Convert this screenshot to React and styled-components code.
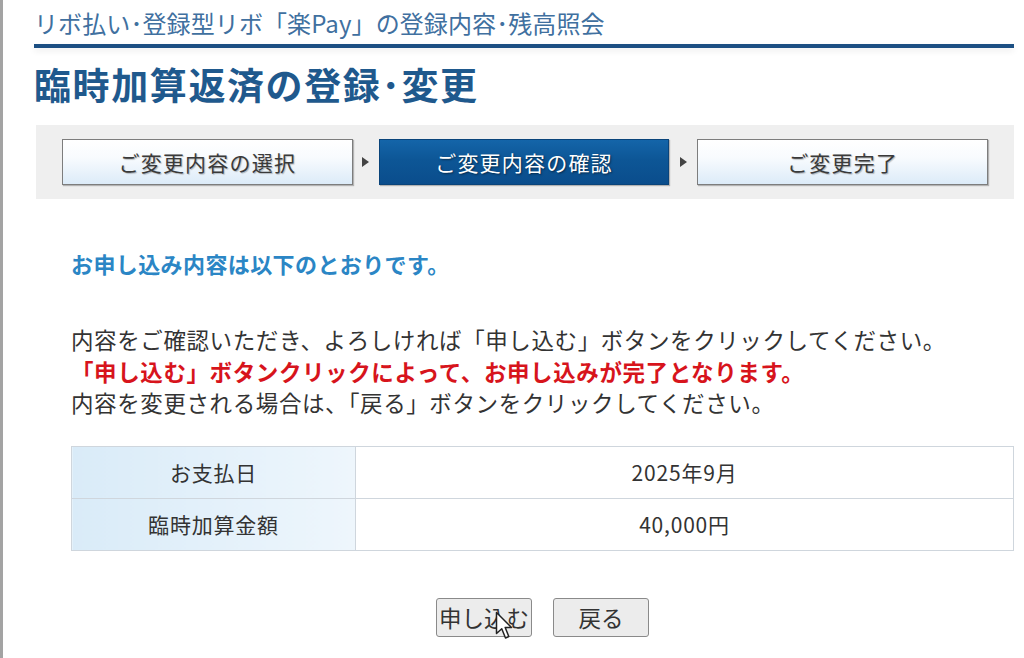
import styled, { createGlobalStyle } from 'styled-components';

const GlobalStyle = createGlobalStyle`
	html, body {
		margin: 0;
		padding: 0;
		background: #fff;
	}
	body {
		font-family: "Noto Sans CJK JP", "Noto Sans", sans-serif;
		color: #333;
	}
`;

const Frame = styled.div`
	min-height: 658px;
	box-sizing: border-box;
	border-left: 3px solid #a3a3a3;
	padding: 0 10px 0 31px;
	overflow: hidden;
`;

const SiteTitle = styled.div`
	padding-top: 6px;
	font-size: 24px;
	line-height: 33px;
	color: #40709f;
	letter-spacing: 0.1px;
`;

const Rule = styled.div`
	margin-top: 5px;
	height: 4px;
	background: #1c4f83;
	box-shadow: 0 3px 6px rgba(0, 0, 0, 0.08);
`;

const PageTitle = styled.h1`
	margin: 12px 0 0;
	font-size: 37px;
	line-height: 48px;
	font-weight: bold;
	color: #1f598d;
	letter-spacing: 1.6px;
`;

const StepBar = styled.div`
	margin: 17px 0 0 2px;
	padding: 14px 26px;
	background: #efefef;
	display: grid;
	grid-template-columns: 1fr 26px 1fr 28px 1fr;
	align-items: center;
`;

const Step = styled.div`
	height: 46px;
	box-sizing: border-box;
	display: flex;
	align-items: center;
	justify-content: center;
	font-size: 21px;
	letter-spacing: 1.2px;
	border: 1px solid ${(p) => (p.$active ? '#0a447a' : '#7d7d7d')};
	box-shadow: 1px 1px 1px rgba(0, 0, 0, 0.25);
	color: ${(p) => (p.$active ? '#fff' : '#3a3a3a')};
	text-shadow: ${(p) =>
		p.$active ? '1px 1px 2px rgba(0, 0, 0, 0.5)' : '1px 1px 1px rgba(0, 0, 0, 0.25)'};
	background: ${(p) =>
		p.$active
			? 'linear-gradient(#1465a9 0%, #0d5696 45%, #0a4d8c 100%)'
			: 'linear-gradient(#ffffff 0%, #f8fbfe 40%, #dcebf8 100%)'};
`;

const Arrow = styled.div`
	width: 0;
	height: 0;
	justify-self: center;
	border-top: 5px solid transparent;
	border-bottom: 5px solid transparent;
	border-left: 7px solid #444;
`;

const Content = styled.div`
	padding-left: 37px;
`;

const Lead = styled.p`
	margin: 48px 0 0;
	font-size: 22px;
	line-height: 32px;
	font-weight: bold;
	color: #2b86c5;
	letter-spacing: 0.4px;
`;

const Notes = styled.p`
	margin: 45px 0 0;
	font-size: 22.5px;
	line-height: 31.5px;
	color: #333;
	letter-spacing: 0.6px;
`;

const Warn = styled.span`
	color: #d7141c;
	font-weight: bold;
`;

const Table = styled.table`
	margin-top: 27px;
	width: 100%;
	border-collapse: collapse;
	font-size: 21px;
	color: #333;
	letter-spacing: 0.8px;
`;

const Th = styled.th`
	width: 283px;
	height: 51px;
	padding: 0;
	font-weight: normal;
	border: 1px solid #cfd6dd;
	background: linear-gradient(90deg, #d9ebf8 0%, #eef6fc 100%);
`;

const Td = styled.td`
	height: 51px;
	padding: 0;
	text-align: center;
	border: 1px solid #cfd6dd;
	background: #fff;
`;

const Actions = styled.div`
	position: relative;
	margin-top: 47px;
	display: flex;
	justify-content: center;
	gap: 21px;
`;

const Button = styled.button`
	width: 96px;
	height: 39px;
	padding: 0;
	font-family: inherit;
	font-size: 22.5px;
	color: #333;
	background: #ececec;
	border: 1px solid #8a8a8a;
	border-radius: 3px;
`;

const Cursor = styled.svg`
	position: absolute;
	left: 424px;
	top: 13px;
`;

export default function App() {
	return (
		<>
			<GlobalStyle />
			<Frame>
				<SiteTitle>リボ払い･登録型リボ「楽Pay」の登録内容･残高照会</SiteTitle>
				<Rule />
				<PageTitle>臨時加算返済の登録･変更</PageTitle>
				<StepBar>
					<Step>ご変更内容の選択</Step>
					<Arrow />
					<Step $active>ご変更内容の確認</Step>
					<Arrow />
					<Step>ご変更完了</Step>
				</StepBar>
				<Content>
					<Lead>お申し込み内容は以下のとおりです。</Lead>
					<Notes>
						内容をご確認いただき、よろしければ「申し込む」ボタンをクリックしてください。
						<br />
						<Warn>「申し込む」ボタンクリックによって、お申し込みが完了となります。</Warn>
						<br />
						内容を変更される場合は、「戻る」ボタンをクリックしてください。
					</Notes>
					<Table>
						<tbody>
							<tr>
								<Th>お支払日</Th>
								<Td>2025年9月</Td>
							</tr>
							<tr>
								<Th>臨時加算金額</Th>
								<Td>40,000円</Td>
							</tr>
						</tbody>
					</Table>
					<Actions>
						<Button>申し込む</Button>
						<Button>戻る</Button>
						<Cursor width="18" height="30" viewBox="0 0 12 20">
							<path
								d="M1 1 L1 15 L4.5 11.8 L7 18 L9.2 17 L6.8 11 L11 11 Z"
								fill="#fff"
								stroke="#222"
								strokeWidth="1"
								strokeLinejoin="round"
							/>
						</Cursor>
					</Actions>
				</Content>
			</Frame>
		</>
	);
}
